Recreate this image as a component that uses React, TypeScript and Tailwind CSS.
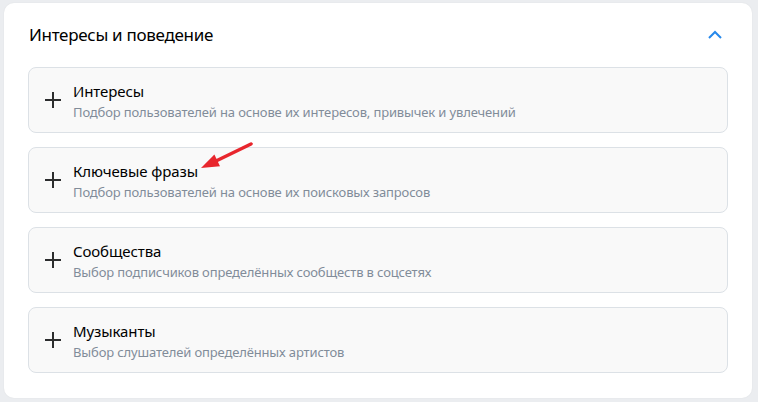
import React from "react";

const items = [
  { title: "Интересы", sub: "Подбор пользователей на основе их интересов, привычек и увлечений" },
  { title: "Ключевые фразы", sub: "Подбор пользователей на основе их поисковых запросов" },
  { title: "Сообщества", sub: "Выбор подписчиков определённых сообществ в соцсетях" },
  { title: "Музыканты", sub: "Выбор слушателей определённых артистов" },
];

function PlusIcon() {
  return (
    <svg width="18" height="18" viewBox="0 0 18 18" className="shrink-0 self-center">
      <path d="M9 1v16M1 9h16" stroke="#2c2d2e" strokeWidth="2" />
    </svg>
  );
}

export default function App() {
  return (
    <div
      className="w-[758px] h-[402px] bg-[#ebedf0] pt-[3px] pl-[4px] pr-[6px]"
      style={{ fontFamily: '"Noto Sans", "Open Sans", sans-serif' }}
    >
      <div className="relative bg-white rounded-[10px] shadow-[0_0_2px_rgba(0,0,0,0.06)] px-[24px] pb-[25px]">
        <div className="flex items-center justify-between h-[64px] pl-[1px] pr-[5px]">
          <h2 className="text-[17px] tracking-[-0.3px] text-[#000000] -mt-[1px]">Интересы и поведение</h2>
          <svg width="16" height="10" viewBox="0 0 16 10" className="-mt-[1px]">
            <path d="M2 8l6-6 6 6" stroke="#2688eb" strokeWidth="2" fill="none" />
          </svg>
        </div>
        <div className="flex flex-col gap-[14px]">
          {items.map((it) => (
            <div
              key={it.title}
              className="h-[66px] rounded-[8px] border border-[#dce1e6] bg-[#f9f9f9] flex items-start pl-[15px] gap-[11px]"
            >
              <PlusIcon />
              <div className="flex flex-col pt-[13px]">
                <span className="text-[15px] leading-[20px] tracking-[-0.1px] text-black">{it.title}</span>
                <span className="mt-[2px] text-[13px] leading-[18px] tracking-[-0.14px] text-[#818c99]">{it.sub}</span>
              </div>
            </div>
          ))}
        </div>
        <svg className="absolute left-[190px] top-[133px]" width="70" height="45" viewBox="0 0 70 45">
          <path d="M57 8L22 25" stroke="#e8262d" strokeWidth="3.5" strokeLinecap="round" />
          <path d="M7 32L20.4 18.4L26 30.2Z" fill="#e8262d" />
        </svg>
      </div>
    </div>
  );
}
